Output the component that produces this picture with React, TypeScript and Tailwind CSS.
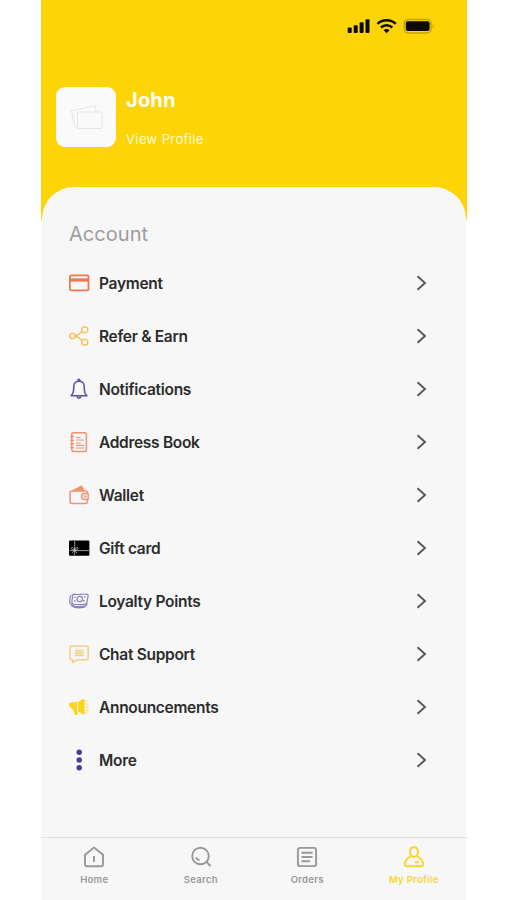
import type { ReactNode } from "react";

type MenuItem = {
  label: string;
  icon: ReactNode;
};

function CardIcon() {
  return (
    <svg viewBox="0 0 22 22" className="size-[22px]" fill="none" stroke="#ee7752" strokeWidth="1.8">
      <rect x="1.9" y="3.4" width="18.6" height="15" rx="1.6" />
      <path d="M2 8h18.4" strokeWidth="3.2" />
    </svg>
  );
}

function ShareIcon() {
  return (
    <svg viewBox="0 0 22 22" className="size-[22px]" fill="none" stroke="#f3c765" strokeWidth="1.6">
      <circle cx="4.5" cy="11" r="2.7" />
      <circle cx="16.7" cy="4.8" r="3" />
      <circle cx="16.7" cy="17.2" r="3" />
      <path d="M7.3 10.6c3-.3 4.300-1.600 6.500-4M7.300 11.400c3 .3 4.300 1.600 6.500 4" />
    </svg>
  );
}

function BellIcon() {
  return (
    <svg viewBox="0 0 22 22" className="size-[22px]" fill="none" stroke="#5a50a4" strokeWidth="1.6" strokeLinejoin="round">
      <path d="M3.2 17.700c1.600-1.500 2.500-3.400 2.500-6.400V8.800c0-3.200 2.200-5.700 5.300-5.700s5.300 2.500 5.300 5.700v2.500c0 3 .9 4.900 2.500 6.400z" />
      <path d="M10.200 2.700V2a.8.8 0 0 1 1.600 0v.7M9.300 18.300a1.700 1.700 0 0 0 3.400 0" />
    </svg>
  );
}

function BookIcon() {
  return (
    <svg viewBox="0 0 22 22" className="size-[22px]" fill="none" stroke="#ef9270" strokeWidth="1.5" strokeLinecap="round">
      <rect x="3.8" y="1.8" width="14.6" height="18.6" rx="1.8" />
      <path d="M2.800 5.500h2.600M2.800 9.200h2.600M2.800 12.900h2.600M2.800 16.600h2.600" />
      <path d="M8.300 6.500h4M8.300 9h7M8.300 12h4M8.300 14.300h7.300M8.300 17h7.300" strokeWidth="1.2" />
    </svg>
  );
}

function WalletIcon() {
  return (
    <svg viewBox="0 0 22 22" className="size-[22px]" fill="none" stroke="#ef9270" strokeWidth="1.5" strokeLinejoin="round">
      <path d="M19.300 9.300V8.500c0-.9-.6-1.500-1.500-1.500H4.300L2.200 7.500v10.800c0 .8.400 1.200 1.200 1.200h14.400c.9 0 1.500-.6 1.500-1.500v-2.400" />
      <path d="M4.500 6.600 13.500 1.800l2.800 4.800z" fill="#ef9270" strokeWidth="1" />
      <path d="M20.100 9.500h-3.600a2.900 2.900 0 0 0 0 5.900h3.600z" />
      <circle cx="17" cy="12.400" r=".5" />
    </svg>
  );
}

function GiftCardIcon() {
  return (
    <svg viewBox="0 0 22 22" className="size-[22px]" fill="none" stroke="#d6d6d6" strokeWidth=".7">
      <rect x="1" y="3.500" width="20.400" height="15.200" rx="1" fill="#000" stroke="none" />
      <path d="M6.700 4v14.300M1.500 13.600h19.400" />
      <path d="M6.700 13.200C3.500 12.800 3 11.800 3.500 10.800c1-.7 2.600.2 3.200 2.400.6-2.200 2.200-3.100 3.200-2.400.5 1 0 2-3.200 2.400l-2.400 3M6.700 13.200l2.400 3" />
    </svg>
  );
}

function MoneyIcon() {
  return (
    <svg viewBox="0 0 22 22" className="size-[22px]" fill="none" stroke="#8980bd" strokeWidth="1.2" strokeLinejoin="round">
      <path d="M6 4.200c3.600 1 8-.6 12.400-.1 1.200.2 1.900.7 1.700 1.800l-1.200 6.600c-.3 1.400-1.200 1.900-2.500 1.900-4 .2-7.600.9-11.400-.4-1-.4-1.300-1-1.100-2l.8-6.400c.1-1 .5-1.500 1.300-1.400z" />
      <path d="M3.500 5.200C2.600 5.500 2.300 6 2.200 6.900l-.5 5.200c0 1 .2 1.500 1.100 2l3.800 2.200c3.200.9 6.600.5 9.800 0 1.300-.2 2.400-1.200 2.900-2.500M3.300 14.500l.5 1.200c3 2.500 8 2.400 12.300 1.500l1.300-.9" />
      <circle cx="11.700" cy="9.100" r="2.700" />
      <path d="M7.500 6.500c-.2 1-.7 1.300-1.400 1.400m0 2.800c.7.100 1.100.6 1.100 1.300m9-5.900c0 .8.400 1.200 1.200 1.300m-.5 3c-.8.100-1.300.5-1.500 1.200" />
    </svg>
  );
}

function ChatIcon() {
  return (
    <svg viewBox="0 0 22 22" className="size-[22px]" fill="none" stroke="#f4cf81" strokeWidth="1.5" strokeLinejoin="round">
      <path d="M4 3h14.200c1.200 0 2 .8 2 2v9.800c0 1.200-.8 2-2 2H9.300L4.500 19.500v-2.700H4c-1.200 0-2-.8-2-2V5c0-1.200.8-2 2-2z" />
      <path d="M7 7.600h8.500M7 10h8.500M7 12.400h8.500" strokeWidth="1.700" />
    </svg>
  );
}

function MegaphoneIcon() {
  return (
    <svg viewBox="0 0 22 22" className="size-[22px]" fill="#fbd51b">
      <path d="M9 5.800v9l.8 2.900c.2.700-.1 1.200-.8 1.200H7.600c-.5 0-.8-.3-1-.8l-1.500-4.200C3 12 1.400 10.500 1 9c-.2-1.400.3-2.200 1.500-2.400z" />
      <path d="M9.900 5.700c1.800-.3 3.100-1.300 4.300-2.400.9-.7 2.400-.2 2.400.9v13.200c0 1-1.500 1.500-2.400.7-1.300-1.300-2.500-2.300-4.300-2.700z" />
      <path d="M17.800 5.500 19 4.300M18.200 8.300l2.100-.5M18.300 11h2.400M18.200 13.700l2.100.6M17.800 16.300l1.200 1.300" stroke="#fbdf5a" strokeWidth="1.300" />
    </svg>
  );
}

function DotsIcon() {
  return (
    <svg viewBox="0 0 22 22" className="size-[22px]" fill="#493b94">
      <circle cx="11.200" cy="3.300" r="2.700" />
      <circle cx="11.200" cy="11" r="2.700" />
      <circle cx="11.200" cy="18.700" r="2.700" />
    </svg>
  );
}

const MENU: MenuItem[] = [
  { label: "Payment", icon: <CardIcon /> },
  { label: "Refer & Earn", icon: <ShareIcon /> },
  { label: "Notifications", icon: <BellIcon /> },
  { label: "Address Book", icon: <BookIcon /> },
  { label: "Wallet", icon: <WalletIcon /> },
  { label: "Gift card", icon: <GiftCardIcon /> },
  { label: "Loyalty Points", icon: <MoneyIcon /> },
  { label: "Chat Support", icon: <ChatIcon /> },
  { label: "Announcements", icon: <MegaphoneIcon /> },
  { label: "More", icon: <DotsIcon /> },
];

function StatusBar() {
  return (
    <div className="flex h-[52px] items-center justify-end pr-[31px]">
      <svg viewBox="0 0 90 18" className="h-[18px] w-[90px]" fill="#0d0b00">
        <rect x="1.700" y="10.600" width="4" height="5.400" rx="1" />
        <rect x="7.700" y="8.300" width="4" height="7.700" rx="1" />
        <rect x="13.600" y="5.300" width="4" height="10.700" rx="1" />
        <rect x="19.500" y="2.300" width="4" height="13.700" rx="1" />
        <g fill="none" stroke="#0d0b00" strokeWidth="2.400">
          <path d="M31.500 6.900c5-4.900 13.200-4.900 18.200 0" />
          <path d="M34.900 10.500c3.200-3 8.200-3 11.400 0" />
        </g>
        <path d="M37.600 13c1.700-1.500 4.300-1.500 6 0l-3 3.200z" />
        <rect x="58.300" y="2.500" width="26.800" height="13.400" rx="4" fill="none" stroke="#c5a405" strokeWidth="1.500" />
        <rect x="59.800" y="4.300" width="23.800" height="9.800" rx="2" />
        <path d="M86.700 7.200c1.800.7 1.800 3.200 0 4z" fill="#c5a405" />
      </svg>
    </div>
  );
}

function ProfileHeader() {
  return (
    <header className="flex h-[97px] px-[15px] pt-[35px]">
      <div className="flex size-[60px] items-center justify-center rounded-[9px] bg-[#fafafa]">
        <svg viewBox="0 0 34 26" className="ml-0.5 h-[26px] w-[34px]" fill="none" stroke="#e5e5e5" strokeWidth="1">
          <path d="M6.500 23.500 4.800 22.800 1.500 6.700 25 1.800l1 6" />
          <rect x="7.500" y="8" width="24.500" height="16.500" rx="1" />
        </svg>
      </div>
      <div className="ml-[10px] flex flex-col text-white">
        <h1 className="mt-[1px] text-[20px] leading-6 font-bold tracking-[0.200px]">John</h1>
        <a className="mt-[17px] text-[13px] leading-5 tracking-[0.380px] text-[#fffbd9]">View Profile</a>
      </div>
    </header>
  );
}

function MenuRow({ label, icon }: MenuItem) {
  return (
    <li className="flex h-[53px] items-center">
      {icon}
      <span className="ml-[9px] flex-1 pt-[2px] text-[15.500px] font-semibold tracking-[-0.300px] text-[#2c2c2c]">{label}</span>
      <svg viewBox="0 0 12 18" className="h-[18px] w-3" fill="none" stroke="#575757" strokeWidth="1.900">
        <path d="m1.500 2.200 7.500 6.800-7.500 6.800" />
      </svg>
    </li>
  );
}

function NavItem({ label, active, children }: { label: string; active?: boolean; children: ReactNode }) {
  return (
    <a className={`flex flex-1 flex-col items-center pt-[7px] ${active ? "text-[#f7d52e]" : "text-[#999999]"}`}>
      <svg viewBox="0 0 24 24" className="size-6" fill="none" stroke="currentColor" strokeWidth="1.900" strokeLinejoin="round">
        {children}
      </svg>
      <span className="mt-[5px] text-[9.500px] leading-3 font-semibold tracking-[0.300px]">{label}</span>
    </a>
  );
}

function BottomNav() {
  return (
    <nav className="-mx-px flex h-[63px] border-t border-[#e0e0e0]">
      <NavItem label="Home">
        <path d="M3 9.700 12 2.400l9 7.300v9.800c0 1-.7 1.700-1.700 1.700H4.700c-1 0-1.700-.7-1.700-1.700z" />
        <path d="M12 11v6" />
      </NavItem>
      <NavItem label="Search">
        <circle cx="11.500" cy="11" r="8.300" />
        <path d="m17.500 17 4 4M7 12.500c.7 1.600 1.900 2.500 3.600 2.900" />
      </NavItem>
      <NavItem label="Orders">
        <rect x="2.900" y="2.900" width="18.200" height="18.200" rx="2.200" />
        <path d="M6.500 7.800h11M6.500 12h11M6.500 16.200h8.500" />
      </NavItem>
      <NavItem label="My Profile" active>
        <path d="M8.700 11.400C6 13 3.200 15.200 2.800 18.500c-.2 1.800.6 2.800 2.400 2.800h13.600c1.800 0 2.600-1 2.400-2.800-.4-3.300-3.200-5.500-5.900-7.100" />
        <path d="M12 2.300c2.600 0 4 1.800 4 4.300 0 2.900-1.500 5.300-4 5.300S8 9.500 8 6.600c0-2.500 1.400-4.300 4-4.300zM13 17.300h3.800" />
      </NavItem>
    </nav>
  );
}

export default function App() {
  return (
    <div className="flex h-[900px] w-full justify-center bg-white font-['Inter',sans-serif]">
      <div className="ml-px flex w-[426px] flex-col bg-[linear-gradient(#fdd405_0_217px,#fcfcfc_222px)]">
        <StatusBar />
        <ProfileHeader />
        <main className="mx-px mt-[38px] flex flex-1 flex-col rounded-t-[32px] bg-[#f7f7f7]">
          <section className="flex-1 px-[26px] pt-[33px]">
            <h2 className="ml-px text-[20px] leading-7 tracking-[0.050px] text-[#9d9d9d]">Account</h2>
            <ul className="mt-[8px] pr-[12px]">
              {MENU.map((item) => (
                <MenuRow key={item.label} {...item} />
              ))}
            </ul>
          </section>
          <BottomNav />
        </main>
      </div>
    </div>
  );
}
